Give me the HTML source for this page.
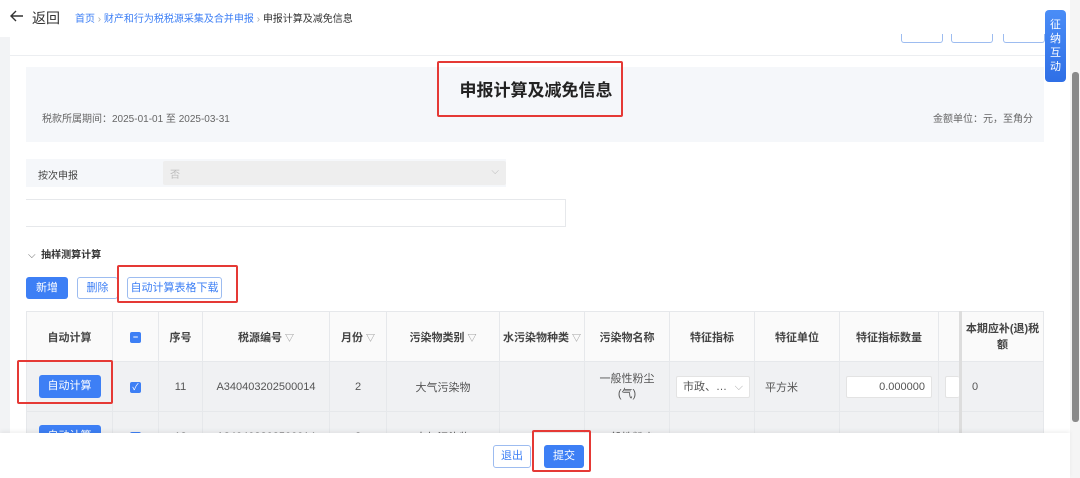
<!DOCTYPE html>
<html><head><meta charset="utf-8"><style>
*{box-sizing:border-box;margin:0;padding:0}
body{width:1080px;height:478px;overflow:hidden;background:#fff;font-family:"Liberation Sans","Noto Sans CJK SC",sans-serif;position:relative;color:#333}
.a{position:absolute}
.red{position:absolute;border:2px solid #e53935;border-radius:2px}
.btn{position:absolute;font-size:11px;text-align:center;border-radius:3px}
.bl{background:#3d7ff5;color:#fff}
.ol{border:1px solid #9dbcf0;color:#3d7ff5;background:#fff}
table{position:absolute;left:26px;top:311px;border-collapse:collapse;font-size:11px;table-layout:fixed}
td,th{border:1px solid #e6e8eb;text-align:center;font-weight:normal;color:#333}
th{height:50px;background:#fafafa;font-weight:bold;color:#444}
td{height:50px;background:#f0f1f3;color:#555}
.f{color:#888;font-weight:normal;font-size:9px}
.cb{display:inline-block;width:11px;height:11px;background:#3d7ff5;border-radius:2px;color:#fff;font-size:9px;line-height:11px}
.inp{background:#fff;border:1px solid #e3e3e3;border-radius:2px;height:22px;line-height:20px}
</style></head><body>
<div class="a" style="left:0;top:37px;width:10px;height:441px;background:#f2f3f5"></div>
<div class="a" style="left:10px;top:55px;width:1050px;height:1px;background:#eceef1"></div>
<svg class="a" style="left:9px;top:9px" width="16" height="14" viewBox="0 0 16 14"><path d="M14 7H2M7 2L2 7l5 5" fill="none" stroke="#333" stroke-width="1.4"/></svg>
<div class="a" style="left:32px;top:8px;font-size:14px;color:#333">返回</div>
<div class="a" style="left:75px;top:10px;font-size:10px;color:#3d7ff5">首页 <span style="color:#aaa">›</span> 财产和行为税税源采集及合并申报 <span style="color:#aaa">›</span> <span style="color:#333">申报计算及减免信息</span></div>
<div class="a" style="left:901px;top:34px;width:42px;height:9px;border:1px solid #9dbcf0;border-top:none;border-radius:0 0 3px 3px"></div>
<div class="a" style="left:951px;top:34px;width:42px;height:9px;border:1px solid #9dbcf0;border-top:none;border-radius:0 0 3px 3px"></div>
<div class="a" style="left:1003px;top:34px;width:42px;height:9px;border:1px solid #9dbcf0;border-top:none;border-radius:0 0 3px 3px"></div>
<div class="a" style="left:1045px;top:10px;width:21px;height:72px;background:linear-gradient(#4a8df7,#2f6fe6);border-radius:4px;color:#fff;font-size:11px;line-height:14px;text-align:center;padding-top:8px">征<br>纳<br>互<br>动</div>
<div class="a" style="left:1070px;top:0;width:10px;height:478px;background:#f5f5f5"></div>
<div class="a" style="left:1072px;top:72px;width:7px;height:350px;background:#8a8a8a;border-radius:3px"></div>
<div class="a" style="left:26px;top:67px;width:1018px;height:75px;background:#f5f7fa"></div>
<div class="a" style="left:-4px;top:76px;width:1080px;text-align:center;font-size:17px;font-weight:bold;color:#222">申报计算及减免信息</div>
<div class="red" style="left:437px;top:61px;width:186px;height:56px"></div>
<div class="a" style="left:42px;top:110px;font-size:10px;color:#666">税款所属期间：2025-01-01 至 2025-03-31</div>
<div class="a" style="right:47px;top:110px;font-size:10px;color:#666">金额单位：元，至角分</div>
<div class="a" style="left:26px;top:159px;width:480px;height:28px;background:#f5f7fa"></div>
<div class="a" style="left:38px;top:167px;font-size:10px;color:#444">按次申报</div>
<div class="a" style="left:163px;top:161px;width:343px;height:24px;background:#eeeeee;border-radius:2px;font-size:10px;color:#bbb;padding:5px 7px">否<span style="float:right">⌵</span></div>
<div class="a" style="left:26px;top:199px;width:540px;height:28px;border:1px solid #e6e8eb;border-left:none"></div>
<div class="a" style="left:28px;top:246px;font-size:10px;font-weight:bold;color:#333"><span style="font-weight:normal;color:#666">⌵</span>&nbsp; 抽样测算计算</div>
<div class="btn bl" style="left:26px;top:277px;width:42px;height:22px;line-height:22px">新增</div>
<div class="btn ol" style="left:77px;top:277px;width:41px;height:22px;line-height:20px">删除</div>
<div class="btn ol" style="left:127px;top:277px;width:95px;height:22px;line-height:20px">自动计算表格下载</div>
<div class="red" style="left:117px;top:265px;width:121px;height:38px"></div>
<table>
<colgroup><col style="width:86px"><col style="width:46px"><col style="width:44px"><col style="width:127px"><col style="width:57px"><col style="width:113px"><col style="width:85px"><col style="width:85px"><col style="width:85px"><col style="width:85px"><col style="width:99px"><col style="width:20px"><col style="width:83px"></colgroup>
<tr><th>自动计算</th><th><span class="cb">−</span></th><th>序号</th><th>税源编号 <span class="f">▽</span></th><th>月份 <span class="f">▽</span></th><th>污染物类别 <span class="f">▽</span></th><th>水污染物种类 <span class="f">▽</span></th><th>污染物名称</th><th>特征指标</th><th>特征单位</th><th>特征指标数量</th><th style="border-right:3px solid #ddd"></th><th style="line-height:16px">本期应补(退)税额</th></tr>
<tr><td><div class="btn bl" style="position:static;display:inline-block;width:62px;height:23px;line-height:23px">自动计算</div></td><td><span class="cb">✓</span></td><td>11</td><td>A340403202500014</td><td>2</td><td>大气污染物</td><td></td><td style="line-height:15px">一般性粉尘<br>(气)</td><td><div class="inp" style="width:74px;margin-left:6px;text-align:left;padding-left:6px">市政、… <span style="color:#aaa;float:right;margin-right:6px">⌵</span></div></td><td style="text-align:left;padding-left:10px">平方米</td><td><div class="inp" style="width:86px;margin-left:6px;text-align:right;padding-right:6px">0.000000</div></td><td style="border-right:3px solid #ddd;padding-left:6px"><div class="inp" style="width:14px;border-right:none"></div></td><td style="text-align:left;padding-left:10px">0</td></tr>
<tr><td><div class="btn bl" style="position:static;display:inline-block;width:62px;height:23px;line-height:23px">自动计算</div></td><td><span class="cb">✓</span></td><td>12</td><td>A340403202500014</td><td>2</td><td>大气污染物</td><td></td><td>一般性粉尘</td><td></td><td></td><td></td><td style="border-right:3px solid #ddd"></td><td></td></tr>
</table>
<div class="red" style="left:17px;top:360px;width:96px;height:44px"></div>
<div class="a" style="left:0;top:433px;width:1070px;height:45px;background:#fff;box-shadow:0 -2px 4px rgba(0,0,0,.06)"></div>
<div class="btn ol" style="left:493px;top:445px;width:38px;height:23px;line-height:21px">退出</div>
<div class="btn bl" style="left:544px;top:445px;width:40px;height:23px;line-height:23px">提交</div>
<div class="red" style="left:532px;top:430px;width:59px;height:42px"></div>
</body></html>
